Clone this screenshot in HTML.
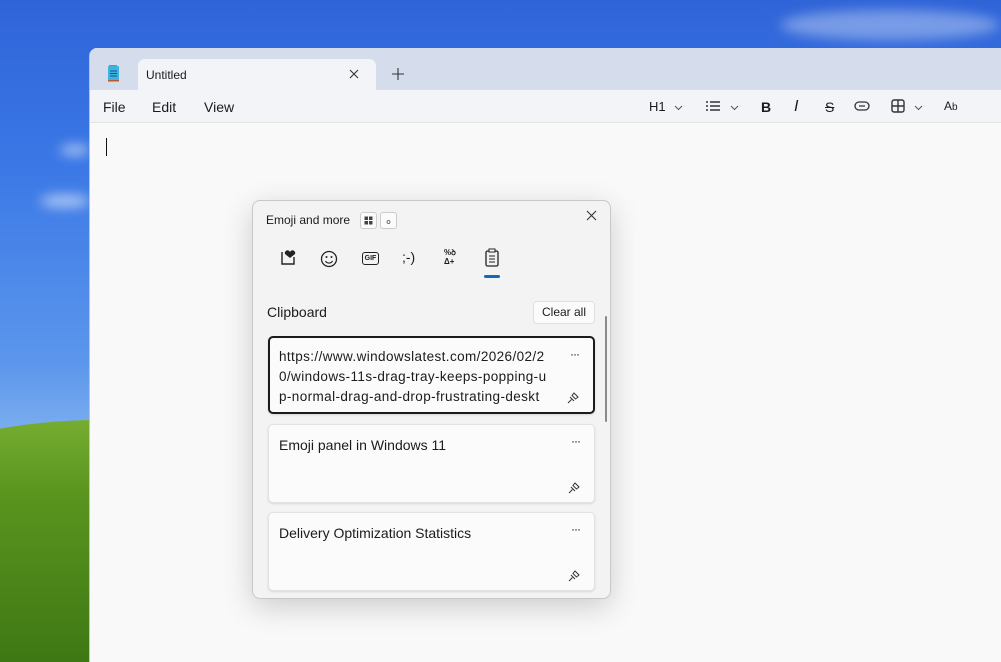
<!DOCTYPE html>
<html><head><meta charset="utf-8"><style>
*{margin:0;padding:0;box-sizing:border-box}
html,body{width:1001px;height:662px;overflow:hidden}
body{position:relative;font-family:"Liberation Sans",sans-serif;color:#1b1b1b;
background:linear-gradient(180deg,#2f64d8 0%,#3b78e6 25%,#5c97ec 55%,#8ab8f0 70%,#7aa8e8 100%)}
.hill{position:absolute;left:-200px;top:420px;width:600px;height:242px;border-radius:50% 50% 0 0/62% 62% 0 0;background:linear-gradient(180deg,#76ad30,#5a951f 30%,#3e7814)}
.cloud{position:absolute;border-radius:50%;background:rgba(255,255,255,.6);filter:blur(6px)}
.win{position:absolute;left:89px;top:48px;width:912px;height:614px;background:#f9f9f9;border-radius:8px 0 0 0;overflow:hidden;border-left:1px solid #b8c4de}
.title{height:42px;background:#d5dcec;position:relative}
.tab{position:absolute;left:48px;top:11px;width:238px;height:31px;background:#f3f4f8;border-radius:7px 7px 0 0;font-size:12px;padding:9px 8px}
.menu{height:33px;background:#f3f4f8;border-bottom:1px solid #e4e4e4;position:relative;font-size:14px}
.menu span{position:absolute;top:9px}
.panel{position:absolute;left:252px;top:200px;width:359px;height:399px;background:#f3f3f3;border:1px solid #c8c8c8;border-radius:8px;box-shadow:0 8px 30px rgba(0,0,0,.18)}
.card{position:absolute;left:15px;width:327px;background:#fbfbfb;border:1px solid #e2e2e2;border-radius:5px;box-shadow:0 1px 2px rgba(0,0,0,.12);font-size:14px;line-height:20px;padding:10px 10px}
.dots{position:absolute;right:14px;top:6px;font-size:12px;letter-spacing:-1px}
.pin{position:absolute;right:14px;bottom:8px}
</style></head><body>
<div class="hill"></div>
<div class="cloud" style="left:60px;top:145px;width:30px;height:10px"></div>
<div class="cloud" style="left:40px;top:195px;width:50px;height:12px"></div>
<div class="cloud" style="left:780px;top:10px;width:220px;height:30px;background:rgba(255,255,255,.35)"></div>
<div class="win">
 <div class="title">
  <svg style="position:absolute;left:17px;top:17px" width="13" height="17" viewBox="0 0 13 17"><rect x="1" y="1" width="11" height="15" rx="1" fill="#3fb3e0"/><rect x="1" y="15" width="11" height="1.5" fill="#b5582a"/><path d="M3 6h7M3 8.5h7M3 11h7" stroke="#0c5a80" stroke-width="1"/><path d="M3 1v-1M5 1v-1M7 1v-1M9 1v-1" stroke="#333"/></svg>
  <div class="tab">Untitled<svg style="position:absolute;right:17px;top:10px" width="10" height="10"><path d="M1 1l8 8M9 1l-8 8" stroke="#333" stroke-width="1.1"/></svg></div>
  <svg style="position:absolute;left:302px;top:20px" width="12" height="12"><path d="M6 0v12M0 6h12" stroke="#333" stroke-width="1.1"/></svg>
 </div>
 <div class="menu"><span style="left:13px">File</span><span style="left:62px">Edit</span><span style="left:114px">View</span>
  <span style="left:559px;font-size:13px">H1</span>
  <svg style="position:absolute;left:584px;top:15px" width="9" height="6"><path d="M1 1l3.5 3.5L8 1" fill="none" stroke="#555"/></svg>
  <svg style="position:absolute;left:616px;top:10px" width="16" height="12"><path d="M0 2h2M0 6h2M0 10h2M4 2h10M4 6h10M4 10h10" stroke="#333" stroke-width="1.4"/></svg>
  <svg style="position:absolute;left:640px;top:15px" width="9" height="6"><path d="M1 1l3.5 3.5L8 1" fill="none" stroke="#555"/></svg>
  <span style="left:671px;font-weight:bold">B</span>
  <span style="left:704px;font-style:italic;font-size:16px;top:8px">I</span>
  <span style="left:735px;text-decoration:line-through">S</span>
  <svg style="position:absolute;left:764px;top:11px" width="16" height="10"><rect x="1" y="1" width="14" height="8" rx="4" fill="none" stroke="#333" stroke-width="1.3"/><path d="M5 5h6" stroke="#333" stroke-width="1.3"/></svg>
  <svg style="position:absolute;left:801px;top:9px" width="14" height="14"><rect x="1" y="1" width="12" height="12" rx="2" fill="none" stroke="#333" stroke-width="1.4"/><path d="M7 1v12M1 7h12" stroke="#333" stroke-width="1.4"/></svg>
  <svg style="position:absolute;left:824px;top:15px" width="9" height="6"><path d="M1 1l3.5 3.5L8 1" fill="none" stroke="#555"/></svg>
  <span style="left:854px;font-size:12px">A<small>b</small></span>
 </div>
 <div style="position:absolute;left:16px;top:90px;width:1px;height:18px;background:#111"></div>
</div>
<div class="panel">
 <div style="position:absolute;left:13px;top:12px;font-size:12px">Emoji and more</div>
 <div style="position:absolute;left:107px;top:11px;width:17px;height:17px;border:1px solid #ccc;border-radius:3px;background:#fbfbfb"><svg width="15" height="15"><rect x="3.5" y="3.5" width="3.5" height="3.5" fill="#444"/><rect x="8" y="3.5" width="3.5" height="3.5" fill="#444"/><rect x="3.5" y="8" width="3.5" height="3.5" fill="#444"/><rect x="8" y="8" width="3.5" height="3.5" fill="#444"/></svg></div>
 <div style="position:absolute;left:127px;top:11px;width:17px;height:17px;border:1px solid #ccc;border-radius:3px;background:#fbfbfb"><svg width="15" height="15"><circle cx="7.5" cy="9" r="1.5" fill="none" stroke="#555" stroke-width=".8"/></svg></div>
 <svg style="position:absolute;left:333px;top:9px" width="11" height="11"><path d="M1 1l9 9M10 1l-9 9" stroke="#333" stroke-width="1.1"/></svg>
 <svg style="position:absolute;left:27px;top:48px" width="18" height="18"><path d="M2 3v12h12V8" fill="none" stroke="#222" stroke-width="1.4"/><path d="M10 9l-5-4a2 2 0 0 1 5-2a2 2 0 0 1 5 2z" fill="#222"/></svg>
 <svg style="position:absolute;left:67px;top:49px" width="18" height="18"><circle cx="9" cy="9" r="7.5" fill="none" stroke="#222" stroke-width="1.3"/><circle cx="6.5" cy="7" r="1" fill="#222"/><circle cx="11.5" cy="7" r="1" fill="#222"/><path d="M5.5 11a4 4 0 0 0 7 0" fill="none" stroke="#222" stroke-width="1.2"/></svg>
 <div style="position:absolute;left:109px;top:51px;width:17px;height:13px;border:1.3px solid #222;border-radius:3px;font-size:7px;font-weight:bold;text-align:center;line-height:11px">GIF</div>
 <div style="position:absolute;left:149px;top:48px;font-size:14px">;-)</div>
 <div style="position:absolute;left:191px;top:47px;font-size:8px;line-height:9px;font-weight:bold">%ꝺ<br>Δ+</div>
 <svg style="position:absolute;left:232px;top:47px" width="14" height="19"><rect x="1" y="3" width="12" height="15" rx="1.5" fill="none" stroke="#222" stroke-width="1.3"/><rect x="4" y="1" width="6" height="3" fill="#fff" stroke="#222"/><path d="M4 8h6M4 11h6M4 14h6" stroke="#222"/></svg>
 <div style="position:absolute;left:231px;top:74px;width:16px;height:3px;border-radius:2px;background:#0f6cbd"></div>
 <div style="position:absolute;left:14px;top:103px;font-size:14px">Clipboard</div>
 <div style="position:absolute;left:280px;top:100px;width:62px;height:23px;border:1px solid #e0e0e0;border-radius:4px;background:#fbfbfb;font-size:12px;text-align:center;line-height:21px">Clear all</div>
 <div style="position:absolute;left:352px;top:115px;width:2px;height:106px;background:#8a8a8a;border-radius:1px"></div>
 <div class="card" style="top:135px;height:78px;border:2px solid #1b1b1b;padding:9px 9px;font-size:13.5px;letter-spacing:0.4px">https://www.windowslatest.com/2026/02/2<br>0/windows-11s-drag-tray-keeps-popping-u<br>p-normal-drag-and-drop-frustrating-deskt<span class="dots">···</span><svg class="pin" width="12" height="12" viewBox="0 0 12 12"><path d="M1 11l3.5-3.5M3 5l4 4M7 1l4 4L8.5 7 5 3.5z" fill="none" stroke="#333"/></svg></div>
 <div class="card" style="top:223px;height:79px">Emoji panel in Windows 11<span class="dots">···</span><svg class="pin" width="12" height="12" viewBox="0 0 12 12"><path d="M1 11l3.5-3.5M3 5l4 4M7 1l4 4L8.5 7 5 3.5z" fill="none" stroke="#333"/></svg></div>
 <div class="card" style="top:311px;height:79px">Delivery Optimization Statistics<span class="dots">···</span><svg class="pin" width="12" height="12" viewBox="0 0 12 12"><path d="M1 11l3.5-3.5M3 5l4 4M7 1l4 4L8.5 7 5 3.5z" fill="none" stroke="#333"/></svg></div>
</div>
</body></html>
